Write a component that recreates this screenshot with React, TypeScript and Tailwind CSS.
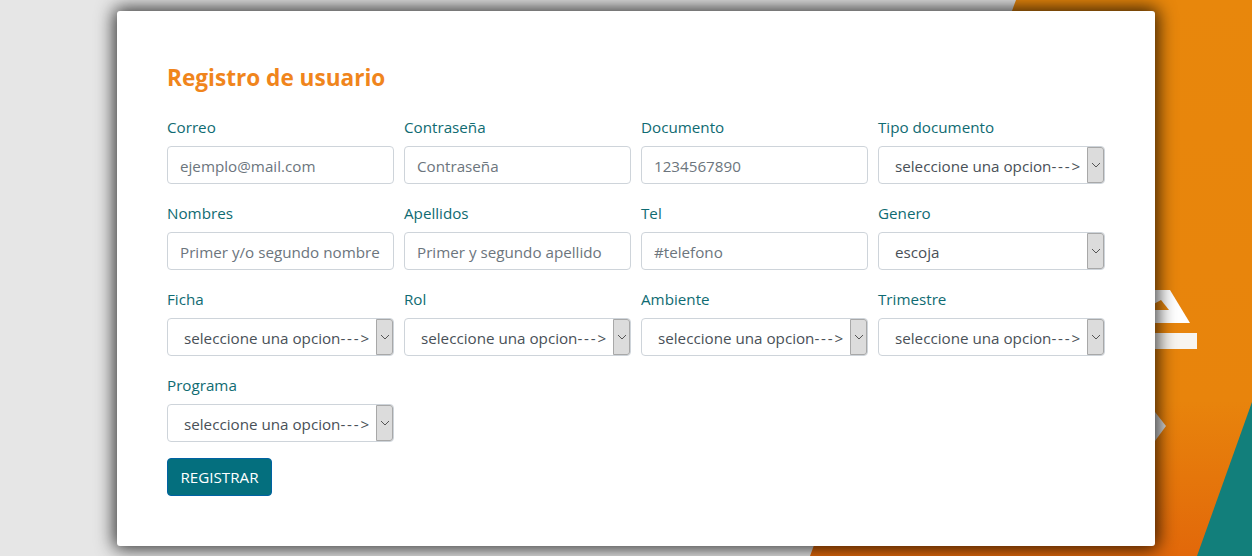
import React from "react";

const font = { fontFamily: "'Open Sans', 'Noto Sans', sans-serif" };

function Field({ label, placeholder }: { label: string; placeholder: string }) {
  return (
    <div className="flex flex-col">
      <label className="text-[15.2px] leading-[24px] mb-[7px] text-[#0f6b72]">{label}</label>
      <input
        placeholder={placeholder}
        className="h-[38px] w-full rounded-[4px] border border-[#ced4da] bg-white px-3 pt-[1px] text-[15.2px] text-[#495057] placeholder:text-[#6c757d] outline-none"
      />
    </div>
  );
}

function Select({ label, value }: { label: string; value: string }) {
  const dashed = value.endsWith("--->");
  return (
    <div className="flex flex-col">
      <label className="text-[15.2px] leading-[24px] mb-[7px] text-[#0f6b72]">{label}</label>
      <div className="flex h-[38px] w-full rounded-[4px] border border-[#ced4da] bg-white">
        <span className="flex-1 pl-4 text-[15.2px] leading-[38px] text-[#495057] whitespace-nowrap overflow-hidden">
          {dashed ? value.slice(0, -4) : value}
          {dashed && <span className="tracking-[1.8px]">---&gt;</span>}
        </span>
        <span className="flex w-[17px] items-center justify-center rounded-r-[3px] border border-[#a8a8a8] bg-[#dcdcdc]">
          <svg width="10" height="6" viewBox="0 0 10 6" fill="none" stroke="#555" strokeWidth="1"><path d="M1 1l4 4 4-4" /></svg>
        </span>
      </div>
    </div>
  );
}

function Background() {
  return (
    <svg className="absolute inset-0" width="1252" height="556" viewBox="0 0 1252 556">
      <defs>
        <linearGradient id="o" x1="0" y1="0" x2="0" y2="1">
          <stop offset="0" stopColor="#e8870c" />
          <stop offset="0.72" stopColor="#e8840c" />
          <stop offset="1" stopColor="#e2680a" />
        </linearGradient>
      </defs>
      <rect width="1252" height="556" fill="#e6e6e6" />
      <polygon points="1016,0 1252,0 1252,556 810,556" fill="url(#o)" />
      <polygon points="1150,290 1170,290 1190,323 1150,323" fill="#ffffff" />
      <polygon points="1161,300 1169,310 1150,310 1150,306" fill="#e8860c" />
      <rect x="1150" y="333" width="47" height="16" fill="#f8f5f0" />
      <polygon points="1150,412 1155,412 1166,426 1155,441 1150,441" fill="#d8d8d8" />
      <polygon points="1252,402 1252,556 1197,556" fill="#127f7b" />
    </svg>
  );
}

export default function App() {
  return (
    <div className="relative h-[556px] w-[1252px] overflow-hidden" style={font}>
      <Background />
      <div className="relative ml-[117px] mt-[11px] h-[535px] w-[1038px] rounded-[3px] bg-white px-[50px] pt-[51px] shadow-[0_0_18px_3px_rgba(0,0,0,0.78)]">
        <h1 className="mb-[21px] text-[22.6px] font-bold leading-[32px] text-[#f0851c]">Registro de usuario</h1>
        <div className="grid w-[938px] grid-cols-4 gap-x-[10px] gap-y-[17px]">
          <Field label="Correo" placeholder="ejemplo@mail.com" />
          <Field label="Contraseña" placeholder="Contraseña" />
          <Field label="Documento" placeholder="1234567890" />
          <Select label="Tipo documento" value="seleccione una opcion--->" />
          <Field label="Nombres" placeholder="Primer y/o segundo nombre" />
          <Field label="Apellidos" placeholder="Primer y segundo apellido" />
          <Field label="Tel" placeholder="#telefono" />
          <Select label="Genero" value="escoja" />
          <Select label="Ficha" value="seleccione una opcion--->" />
          <Select label="Rol" value="seleccione una opcion--->" />
          <Select label="Ambiente" value="seleccione una opcion--->" />
          <Select label="Trimestre" value="seleccione una opcion--->" />
          <Select label="Programa" value="seleccione una opcion--->" />
        </div>
        <button className="mt-[16px] h-[38px] w-[105px] rounded-[4px] border border-[#0062a3] bg-[#046f7e] text-[15.2px] text-white">REGISTRAR</button>
      </div>
    </div>
  );
}
